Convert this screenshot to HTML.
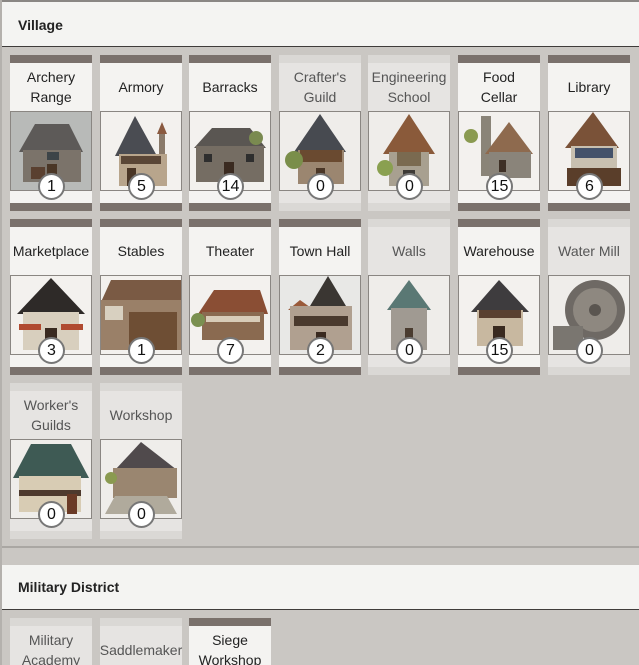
<!DOCTYPE html>
<html style="height:665px;overflow:hidden"><head><meta charset="utf-8">
<style>
*{margin:0;padding:0;box-sizing:border-box}
body{width:639px;height:665px;overflow:hidden;background:#cac7c3;font-family:"Segoe UI","Liberation Sans",sans-serif;position:relative}
.edge{position:absolute;left:0;top:0;width:2px;height:665px;background:#b4b1ad}
.hdr{position:absolute;left:2px;width:637px;height:45px;background:#f4f4f2;border-bottom:1.5px solid #3f3c3a;font-weight:bold;font-size:14px;color:#222;padding:15px 0 0 16px}
.sep{position:absolute;left:2px;width:637px;height:2px;background:#aaa7a3}
.card{position:absolute;width:82px;height:156px;background:#f4f3f1;border-top:8px solid #7a716c;border-bottom:8px solid #7a716c}
.card.off{background:#e6e4e2;border-color:#dad8d5;color:#555}
.t{height:48px;display:flex;align-items:center;justify-content:center;text-align:center;font-size:14px;line-height:20px;color:#222}
.off .t{color:#555}
.img{position:relative;width:82px;height:80px;border:1px solid #8a8682}
.img svg{display:block;width:80px;height:78px}
.b{position:absolute;left:27px;top:61px;width:27px;height:27px;border-radius:50%;background:#fff;border:2px solid #777;font-size:16px;line-height:23px;text-align:center;color:#111}
</style></head><body>
<div class="edge"></div>
<div class="sep" style="top:0;height:2px;background:#8a8784"></div>
<div class="hdr" style="top:2px">Village</div>

<div class="card" style="left:10px;top:55px"><div class="t">Archery<br>Range</div><div class="img"><svg viewBox="0 0 80 78"><rect width="80" height="78" fill="#b8bab8"/><polygon points="8,40 24,12 58,12 72,40" fill="#5d5a58"/><rect x="12" y="38" width="58" height="32" fill="#7b736a"/><rect x="36" y="52" width="10" height="18" fill="#4a3626"/><rect x="36" y="40" width="12" height="8" fill="#3d4448"/><rect x="20" y="55" width="14" height="12" fill="#5a4030"/></svg><div class="b">1</div></div></div>
<div class="card" style="left:100px;top:55px"><div class="t">Armory</div><div class="img"><svg viewBox="0 0 80 78"><rect width="80" height="78" fill="#f3f1ee"/><polygon points="14,44 34,4 56,44" fill="#4a4c52"/><rect x="58" y="20" width="6" height="40" fill="#8a7a6a"/><polygon points="56,22 61,10 66,22" fill="#8a5a40"/><rect x="18" y="42" width="48" height="32" fill="#b8a58c"/><rect x="26" y="56" width="9" height="18" fill="#4a3626"/><rect x="20" y="44" width="40" height="8" fill="#5a4636"/></svg><div class="b">5</div></div></div>
<div class="card" style="left:189px;top:55px"><div class="t">Barracks</div><div class="img"><svg viewBox="0 0 80 78"><rect width="80" height="78" fill="#f3f1ee"/><polygon points="4,36 22,16 60,16 76,36" fill="#5a5652"/><rect x="6" y="34" width="68" height="36" fill="#756d63"/><rect x="34" y="50" width="10" height="20" fill="#3a2a20"/><rect x="14" y="42" width="8" height="8" fill="#2e2e2e"/><rect x="56" y="42" width="8" height="8" fill="#2e2e2e"/><circle cx="66" cy="26" r="7" fill="#7a8a50"/></svg><div class="b">14</div></div></div>
<div class="card off" style="left:279px;top:55px"><div class="t">Crafter's<br>Guild</div><div class="img"><svg viewBox="0 0 80 78"><rect width="80" height="78" fill="#efedea"/><polygon points="14,40 40,2 66,40" fill="#474a50"/><rect x="18" y="38" width="46" height="34" fill="#9b8670"/><rect x="20" y="38" width="42" height="12" fill="#6a4a30"/><rect x="36" y="56" width="9" height="16" fill="#4a3626"/><circle cx="14" cy="48" r="9" fill="#7a8e4a"/></svg><div class="b">0</div></div></div>
<div class="card off" style="left:368px;top:55px"><div class="t">Engineering<br>School</div><div class="img"><svg viewBox="0 0 80 78"><rect width="80" height="78" fill="#efedea"/><polygon points="14,42 40,2 66,42" fill="#8a5a3a"/><rect x="20" y="40" width="40" height="34" fill="#a8a090"/><rect x="28" y="40" width="24" height="14" fill="#7a6a50"/><rect x="34" y="58" width="12" height="16" fill="#3d3a36"/><circle cx="16" cy="56" r="8" fill="#8aa050"/></svg><div class="b">0</div></div></div>
<div class="card" style="left:458px;top:55px"><div class="t">Food<br>Cellar</div><div class="img"><svg viewBox="0 0 80 78"><rect width="80" height="78" fill="#f3f1ee"/><rect x="22" y="4" width="10" height="60" fill="#8a8478"/><polygon points="26,42 50,10 74,42" fill="#8e6a4e"/><rect x="30" y="40" width="42" height="26" fill="#8a847a"/><rect x="40" y="48" width="7" height="12" fill="#3e3026"/><circle cx="12" cy="24" r="7" fill="#8a9a50"/></svg><div class="b">15</div></div></div>
<div class="card" style="left:548px;top:55px"><div class="t">Library</div><div class="img"><svg viewBox="0 0 80 78"><rect width="80" height="78" fill="#f3f1ee"/><polygon points="16,36 44,0 70,36" fill="#7a5238"/><rect x="22" y="34" width="46" height="24" fill="#c8c0b0"/><rect x="26" y="36" width="38" height="10" fill="#44526a"/><rect x="18" y="56" width="54" height="18" fill="#5a3e2a"/></svg><div class="b">6</div></div></div>

<div class="card" style="left:10px;top:219px"><div class="t">Marketplace</div><div class="img"><svg viewBox="0 0 80 78"><rect width="80" height="78" fill="#f3f1ee"/><polygon points="6,38 40,2 74,38" fill="#2e2a28"/><rect x="12" y="36" width="56" height="38" fill="#d8cfbe"/><rect x="8" y="48" width="22" height="6" fill="#b04a30"/><rect x="50" y="48" width="22" height="6" fill="#b04a30"/><rect x="34" y="52" width="12" height="22" fill="#3a2a20"/></svg><div class="b">3</div></div></div>
<div class="card" style="left:100px;top:219px"><div class="t">Stables</div><div class="img"><svg viewBox="0 0 80 78"><rect width="80" height="78" fill="#f3f1ee"/><polygon points="0,26 10,4 80,4 80,26" fill="#7a5a44"/><rect x="0" y="24" width="80" height="50" fill="#9a8068"/><rect x="28" y="36" width="48" height="38" fill="#6e4e34"/><rect x="4" y="30" width="18" height="14" fill="#d8d0c0"/></svg><div class="b">1</div></div></div>
<div class="card" style="left:189px;top:219px"><div class="t">Theater</div><div class="img"><svg viewBox="0 0 80 78"><rect width="80" height="78" fill="#f3f1ee"/><polygon points="8,38 24,14 70,14 78,38" fill="#8a4e34"/><rect x="12" y="36" width="62" height="28" fill="#8a6a50"/><rect x="16" y="40" width="54" height="6" fill="#d8ccb8"/><circle cx="8" cy="44" r="7" fill="#7a9050"/></svg><div class="b">7</div></div></div>
<div class="card" style="left:279px;top:219px"><div class="t">Town Hall</div><div class="img"><svg viewBox="0 0 80 78"><rect width="80" height="78" fill="#e8e8e6"/><polygon points="30,30 48,0 66,30" fill="#3a3632"/><polygon points="8,34 20,24 34,34" fill="#9a5a3a"/><rect x="10" y="30" width="62" height="44" fill="#b0a090"/><rect x="14" y="40" width="54" height="10" fill="#4a3a2e"/><rect x="36" y="56" width="10" height="18" fill="#3a2a20"/></svg><div class="b">2</div></div></div>
<div class="card off" style="left:368px;top:219px"><div class="t">Walls</div><div class="img"><svg viewBox="0 0 80 78"><rect width="80" height="78" fill="#efedea"/><polygon points="18,34 40,4 62,34" fill="#5a7874"/><rect x="22" y="32" width="36" height="42" fill="#a09a92"/><rect x="36" y="52" width="8" height="22" fill="#4a3c30"/></svg><div class="b">0</div></div></div>
<div class="card" style="left:458px;top:219px"><div class="t">Warehouse</div><div class="img"><svg viewBox="0 0 80 78"><rect width="80" height="78" fill="#f3f1ee"/><polygon points="12,36 40,4 70,36" fill="#3e3c3e"/><rect x="18" y="34" width="46" height="36" fill="#c8b8a0"/><rect x="20" y="34" width="42" height="8" fill="#5a4030"/><rect x="34" y="50" width="12" height="20" fill="#3a2a20"/></svg><div class="b">15</div></div></div>
<div class="card off" style="left:548px;top:219px"><div class="t">Water Mill</div><div class="img"><svg viewBox="0 0 80 78"><rect width="80" height="78" fill="#efedea"/><circle cx="46" cy="34" r="30" fill="#6e6964"/><circle cx="46" cy="34" r="22" fill="#8e8880"/><circle cx="46" cy="34" r="6" fill="#5a5550"/><rect x="4" y="50" width="30" height="24" fill="#7a7670"/></svg><div class="b">0</div></div></div>

<div class="card off" style="left:10px;top:383px"><div class="t">Worker's<br>Guilds</div><div class="img"><svg viewBox="0 0 80 78"><rect width="80" height="78" fill="#efedea"/><polygon points="2,38 20,4 60,4 78,38" fill="#3e5a54"/><rect x="8" y="36" width="62" height="36" fill="#d8ccb4"/><rect x="8" y="50" width="62" height="6" fill="#4e3a2e"/><rect x="56" y="54" width="10" height="20" fill="#6a3a26"/></svg><div class="b">0</div></div></div>
<div class="card off" style="left:100px;top:383px"><div class="t">Workshop</div><div class="img"><svg viewBox="0 0 80 78"><rect width="80" height="78" fill="#efedea"/><polygon points="14,30 40,2 76,30" fill="#504a4c"/><rect x="12" y="28" width="64" height="30" fill="#9a8670"/><polygon points="4,74 76,74 66,56 14,56" fill="#b0aa9c"/><circle cx="10" cy="38" r="6" fill="#8a9a50"/></svg><div class="b">0</div></div></div>

<div class="sep" style="top:546px"></div>
<div class="hdr" style="top:565px;height:45px;padding-top:14px">Military District</div>

<div class="card off" style="left:10px;top:618px;height:47px;border-bottom:0"><div class="t">Military<br>Academy</div></div>
<div class="card off" style="left:100px;top:618px;height:47px;border-bottom:0"><div class="t">Saddlemaker</div></div>
<div class="card" style="left:189px;top:618px;height:47px;border-bottom:0"><div class="t">Siege<br>Workshop</div></div>
</body></html>
